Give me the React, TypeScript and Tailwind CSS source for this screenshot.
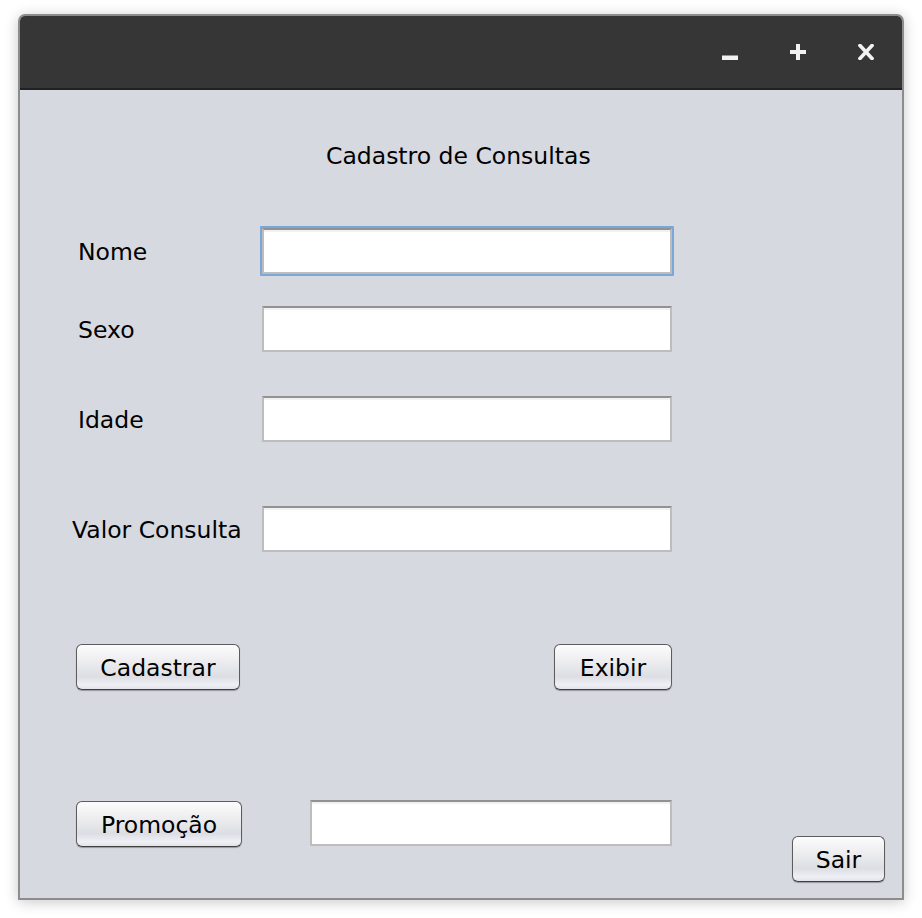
import React from "react";

const btn =
  "h-[46px] pt-[3px] rounded-[6px] border border-[#5c5c5c] border-b-[#404040] bg-[linear-gradient(to_bottom,#fcfcfc_0%,#ececef_40%,#dcdee3_72%,#eef0f6_90%,#e2e4ea_100%)] shadow-[0_1px_1px_rgba(0,0,0,0.3)] text-[23.5px] leading-none text-black flex items-center justify-center";

const field =
  "bg-white border-2 border-[#bdbdbd] border-t-[#929292] shadow-[inset_0_2px_1px_rgba(0,0,0,0.06)]";

const label = "text-[23.5px] leading-none pt-[3px] whitespace-nowrap";

export default function App() {
  return (
    <div className="w-[922px] h-[918px] bg-white pt-[14px] pl-[18px]" style={{ fontFamily: '"DejaVu Sans", Verdana, sans-serif' }}>
      <div className="w-[886px] h-[886px] border-2 border-[#8c8c8c] rounded-t-[7px] overflow-hidden flex flex-col shadow-[0_2px_14px_rgba(0,0,0,0.22)]">
        {/* title bar */}
        <div className="h-[74px] shrink-0 bg-[#363636] border-b-2 border-[#212121] flex items-center justify-end pr-[28px] gap-[52px]">
          <svg width="16" height="16" viewBox="0 0 16 16" className="mt-[2px]">
            <rect x="0" y="10.5" width="16" height="4.5" fill="#f2f2f2" />
          </svg>
          <svg width="16" height="16" viewBox="0 0 16 16">
            <rect x="6" y="0" width="4" height="16" fill="#f2f2f2" />
            <rect x="0" y="6" width="16" height="4" fill="#f2f2f2" />
          </svg>
          <svg width="16" height="16" viewBox="0 0 16 16">
            <path d="M2 1.5 L14 14.5 M14 1.5 L2 14.5" stroke="#f2f2f2" strokeWidth="3.6" strokeLinecap="square" />
          </svg>
        </div>
        {/* body */}
        <div className="flex-1 bg-[#d6d9e0] flex flex-col pl-[58px] text-black">
          <div className="mt-[52px] ml-[248px] text-[23.5px] leading-[28px] h-[28px] whitespace-nowrap">Cadastro de Consultas</div>

          <div className="mt-[56px] flex items-center h-[50px]">
            <div className={`w-[182px] ${label}`}>Nome</div>
            <div className="border-2 border-[#7ba7d8] rounded-[1px]">
              <div className={`${field} w-[410px] h-[46px]`} />
            </div>
          </div>

          <div className="mt-[30px] flex items-center h-[46px]">
            <div className={`w-[184px] ${label}`}>Sexo</div>
            <div className={`${field} w-[410px] h-[46px]`} />
          </div>

          <div className="mt-[44px] flex items-center h-[46px]">
            <div className={`w-[184px] ${label}`}>Idade</div>
            <div className={`${field} w-[410px] h-[46px]`} />
          </div>

          <div className="mt-[64px] flex items-center h-[46px] -ml-[6px]">
            <div className={`w-[190px] ${label}`}>Valor Consulta</div>
            <div className={`${field} w-[410px] h-[46px]`} />
          </div>

          <div className="mt-[92px] flex items-center -ml-[2px]">
            <div className={`${btn} w-[164px]`}>Cadastrar</div>
            <div className={`${btn} w-[118px] ml-[314px]`}>Exibir</div>
          </div>

          <div className="mt-[110px] flex items-start -ml-[2px]">
            <div className={`${btn} w-[166px] mt-[1px] h-[45px]`}>Promoção</div>
            <div className={`${field} w-[362px] h-[46px] ml-[68px]`} />
            <div className={`${btn} w-[93px] ml-[120px] mt-[36px]`}>Sair</div>
          </div>
        </div>
      </div>
    </div>
  );
}
